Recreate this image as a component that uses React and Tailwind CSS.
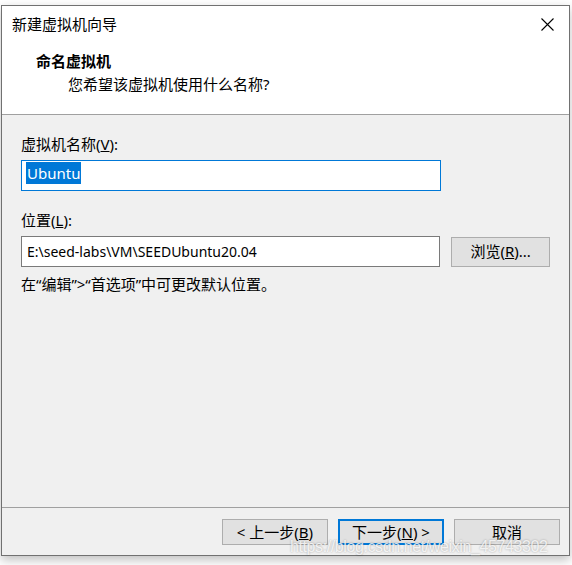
import React from "react";

const font = "font-['Noto_Sans','Noto_Sans_CJK_SC',sans-serif]";

const Btn = ({ children, primary }) => (
  <button
    className={`w-[106px] h-[26px] bg-[#e1e1e1] text-[15px] text-black flex items-center justify-center leading-none ${
      primary ? "border-2 border-[#0078d7]" : "border border-[#adadad]"
    }`}
  >
    {children}
  </button>
);

export default function App() {
  return (
    <div className={`relative w-[572px] h-[565px] bg-white overflow-hidden ${font}`}>
      <div className="ml-[1px] mt-[5px] w-[569px] h-[551px] border border-[#717171] flex flex-col shadow-[0_4px_10px_rgba(0,0,0,0.25)]">
        {/* header */}
        <div className="bg-white h-[109px] border-b border-[#a0a0a0] flex flex-col">
          <div className="h-[37px] flex items-center justify-between pl-[10px] pr-[15px]">
            <span className="text-[15px] text-black leading-none">新建虚拟机向导</span>
            <svg width="13" height="13" viewBox="0 0 13 13">
              <path d="M0.5 0.5 L12.5 12.5 M12.5 0.5 L0.5 12.5" stroke="#000" strokeWidth="1.1" />
            </svg>
          </div>
          <div className="pl-[34px] mt-[11px] text-[15px] font-bold leading-none text-black">命名虚拟机</div>
          <div className="pl-[66px] mt-[8px] text-[15px] leading-none text-black">您希望该虚拟机使用什么名称?</div>
        </div>

        {/* body */}
        <div className="bg-[#f0f0f0] flex-1 flex flex-col px-[19px] border-b border-[#a0a0a0]">
          <div className="mt-[22px] text-[15px] leading-none text-black">
            虚拟机名称(<span className="underline">V</span>):
          </div>
          <div className="mt-[8px] w-[420px] h-[31px] bg-white border border-[#0078d7] flex items-start pt-[1px] pl-[4px]">
            <span className="bg-[#0078d7] text-white text-[15px] leading-[22px] px-[1px]">Ubuntu</span>
          </div>
          <div className="mt-[22px] text-[15px] leading-none text-black">
            位置(<span className="underline">L</span>):
          </div>
          <div className="mt-[8px] flex items-center">
            <div className="w-[420px] h-[31px] bg-white border border-[#7a7a7a] flex items-center pl-[5px] text-[14px] text-black">
              E:\seed-labs\VM\SEEDUbuntu20.04
            </div>
            <div className="ml-[11px] w-[99px] h-[30px] bg-[#e1e1e1] border border-[#adadad] flex items-center justify-center text-[15px] text-black">
              浏览(<span className="underline">R</span>)...
            </div>
          </div>
          <div className="mt-[10px] text-[15px] leading-none text-black">在“编辑”&gt;“首选项”中可更改默认位置。</div>
        </div>

        {/* footer */}
        <div className="bg-[#f0f0f0] h-[47px] flex items-start justify-end gap-[10px] pr-[9px] pt-[11px]">
          <Btn>
            &lt; 上一步(<span className="underline">B</span>)
          </Btn>
          <Btn primary>
            下一步(<span className="underline">N</span>) &gt;
          </Btn>
          <Btn>取消</Btn>
        </div>
      </div>

      <div className="absolute left-[290px] top-[539px] text-[16px] tracking-[-0.4px] leading-none text-white/80 font-['Liberation_Sans',sans-serif] [text-shadow:0_0_2px_rgba(0,0,0,0.35)] pointer-events-none">
        https://blog.csdn.net/weixin_45743302
      </div>
    </div>
  );
}
